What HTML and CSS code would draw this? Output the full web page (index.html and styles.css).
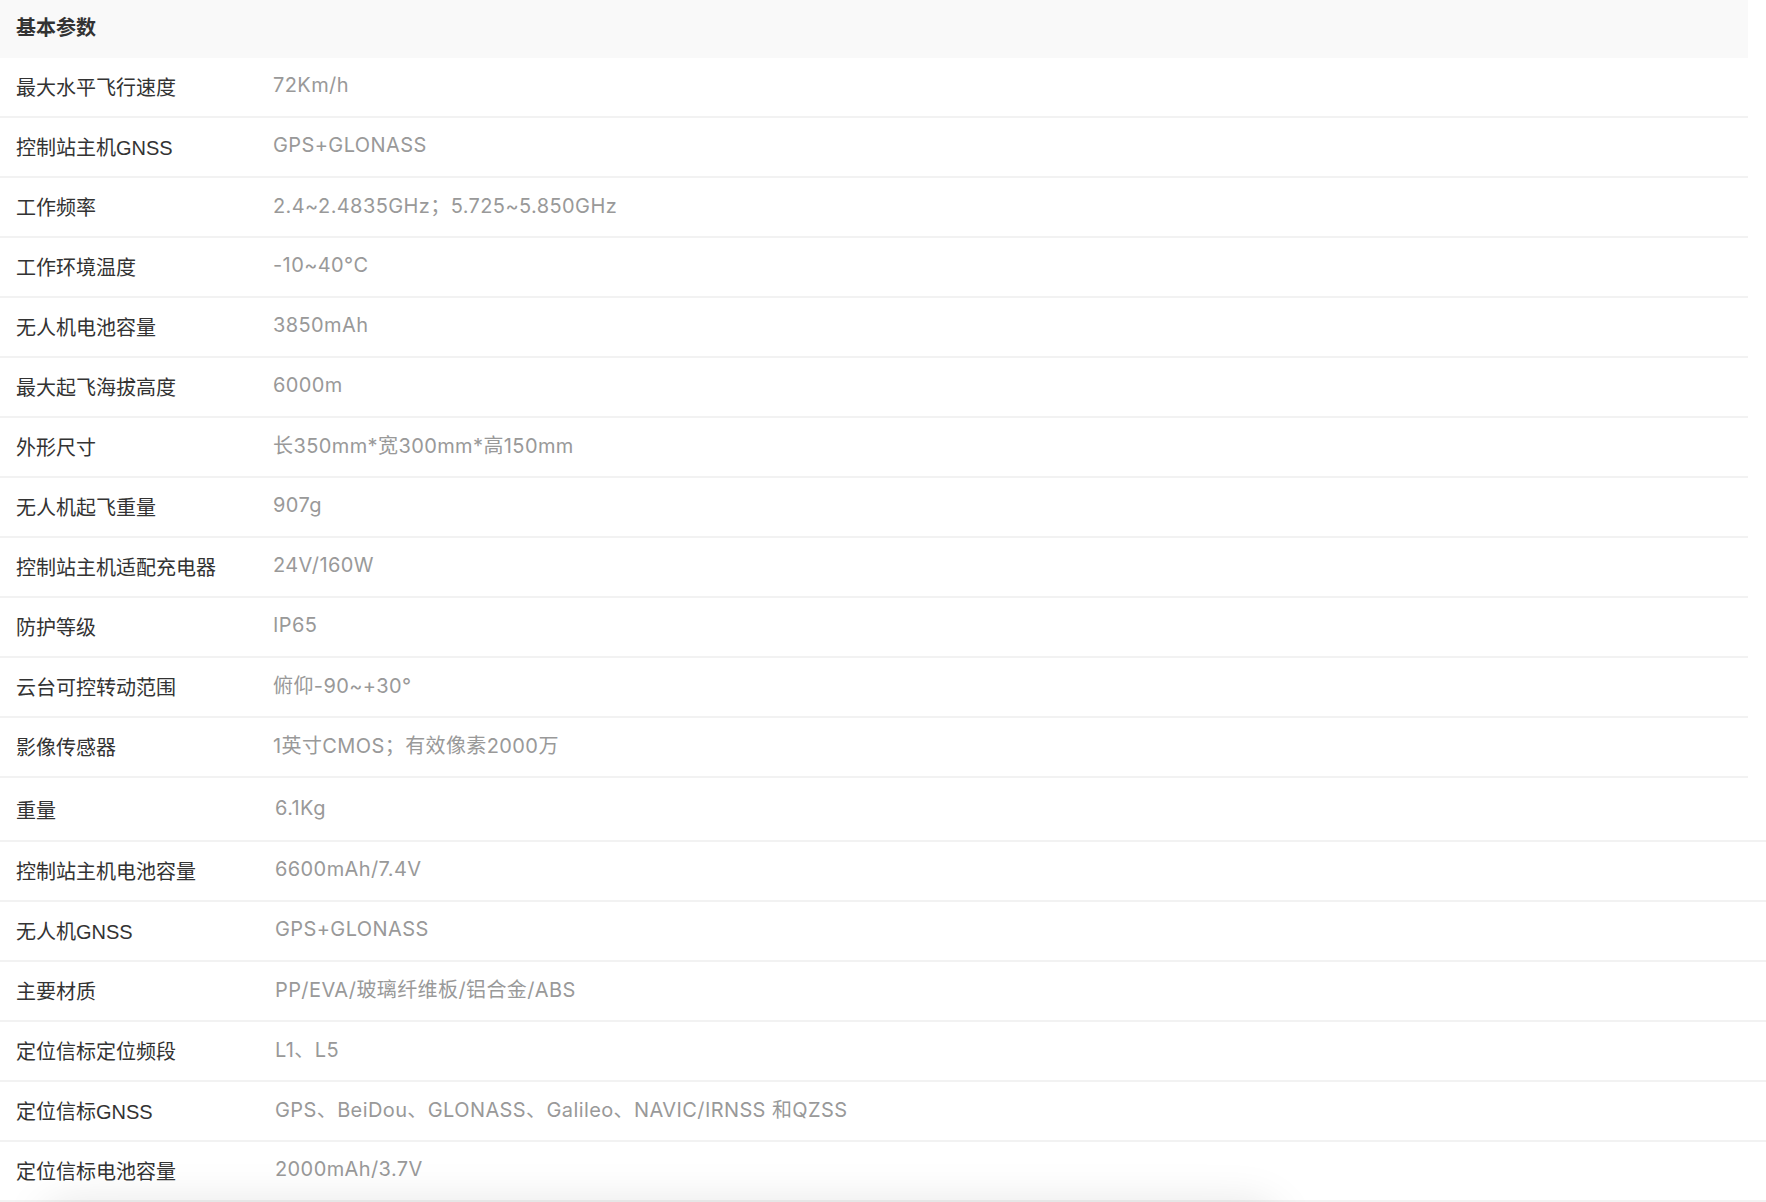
FILE: index.html
```html
<!DOCTYPE html>
<html lang="zh-CN">
<head>
    <meta charset="UTF-8">
    <meta name="viewport" content="width=device-width, initial-scale=1.0">
    <title>基本参数</title>
    <link rel="stylesheet" href="styles.css">
</head>
<body>
    <div class="spec">
        <div class="spec-head">基本参数</div>

        <div class="spec-list">
            <div class="spec-row"><span class="spec-name">最大水平飞行速度</span><span class="spec-value">72Km/h</span></div>
            <div class="spec-row"><span class="spec-name">控制站主机GNSS</span><span class="spec-value">GPS+GLONASS</span></div>
            <div class="spec-row"><span class="spec-name">工作频率</span><span class="spec-value">2.4~2.4835GHz；5.725~5.850GHz</span></div>
            <div class="spec-row"><span class="spec-name">工作环境温度</span><span class="spec-value">-10~40°C</span></div>
            <div class="spec-row"><span class="spec-name">无人机电池容量</span><span class="spec-value">3850mAh</span></div>
            <div class="spec-row"><span class="spec-name">最大起飞海拔高度</span><span class="spec-value">6000m</span></div>
            <div class="spec-row"><span class="spec-name">外形尺寸</span><span class="spec-value">长350mm*宽300mm*高150mm</span></div>
            <div class="spec-row"><span class="spec-name">无人机起飞重量</span><span class="spec-value">907g</span></div>
            <div class="spec-row"><span class="spec-name">控制站主机适配充电器</span><span class="spec-value">24V/160W</span></div>
            <div class="spec-row"><span class="spec-name">防护等级</span><span class="spec-value">IP65</span></div>
            <div class="spec-row"><span class="spec-name">云台可控转动范围</span><span class="spec-value">俯仰-90~+30°</span></div>
            <div class="spec-row"><span class="spec-name">影像传感器</span><span class="spec-value">1英寸CMOS；有效像素2000万</span></div>
        </div>

        <div class="spec-list spec-list-wide">
            <div class="spec-row"><span class="spec-name">重量</span><span class="spec-value">6.1Kg</span></div>
            <div class="spec-row"><span class="spec-name">控制站主机电池容量</span><span class="spec-value">6600mAh/7.4V</span></div>
            <div class="spec-row"><span class="spec-name">无人机GNSS</span><span class="spec-value">GPS+GLONASS</span></div>
            <div class="spec-row"><span class="spec-name">主要材质</span><span class="spec-value">PP/EVA/玻璃纤维板/铝合金/ABS</span></div>
            <div class="spec-row"><span class="spec-name">定位信标定位频段</span><span class="spec-value">L1、L5</span></div>
            <div class="spec-row"><span class="spec-name">定位信标GNSS</span><span class="spec-value">GPS、BeiDou、GLONASS、Galileo、NAVIC/IRNSS 和QZSS</span></div>
            <div class="spec-row"><span class="spec-name">定位信标电池容量</span><span class="spec-value">2000mAh/3.7V</span></div>
        </div>
    </div>

    <!-- floating bar just below the fold, only its shadow is visible -->
    <div class="float-bar"></div>
</body>
</html>
```

FILE: styles.css
```css
body {
    margin: 0;
    background-color: #fff;
    font-family: "Liberation Sans", "Noto Sans CJK SC", sans-serif;
    color: #333;
    overflow: hidden;
}

.spec {
    width: 100%;
}

.spec-head {
    width: 1748px;
    height: 58px;
    box-sizing: border-box;
    padding: 0 16px 6px;
    display: flex;
    align-items: center;
    background-color: #f9f9f9;
    font-size: 20px;
    font-weight: 600;
    color: #333;
}

.spec-list {
    width: 1748px;
}

.spec-list-wide {
    width: 100%;
    padding-top: 2px;
}

.spec-row {
    display: grid;
    grid-template-columns: 257px 1fr;
    align-items: center;
    box-sizing: border-box;
    height: 60px;
    padding: 0 0 2px 16px;
    border-bottom: 2px solid #f2f2f2;
}

.spec-list-wide .spec-row {
    grid-template-columns: 259px 1fr;
}

.spec-list-wide .spec-row:first-child {
    height: 62px;
}

.spec-name {
    font-size: 20px;
    color: #333;
    white-space: nowrap;
}

.spec-value {
    font-family: Inter, "Noto Sans CJK SC", sans-serif;
    font-size: 20px;
    letter-spacing: 0.4px;
    color: #999;
    white-space: nowrap;
    margin-top: -3px;
}

.float-bar {
    position: fixed;
    left: 40px;
    bottom: -60px;
    width: 1240px;
    height: 60px;
    border-radius: 30px;
    background-color: #fff;
    box-shadow: 0 0 44px rgba(0, 0, 0, 0.1);
}
```
